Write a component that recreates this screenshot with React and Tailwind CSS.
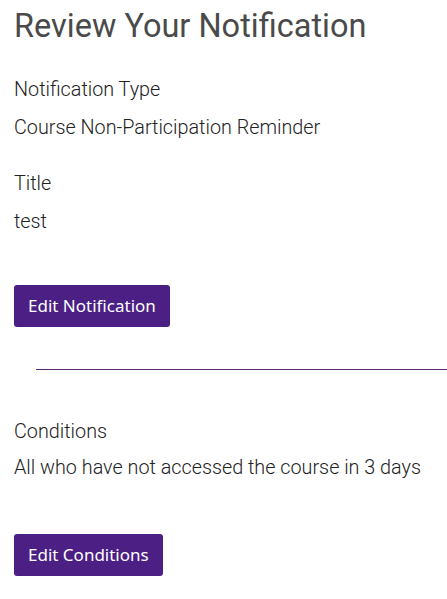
export default function App() {
  return (
    <div className="min-h-screen bg-white pl-[14px] pt-[7px] font-['Roboto',sans-serif]">
      <h1 className="text-[32.5px] leading-[38px] font-normal text-[#4a4a4a]">Review Your Notification</h1>

      {/* Notification details */}
      <div className="mt-[30px] text-[19.8px] font-light leading-[30px] text-[#222]">
        <p>Notification Type</p>
        <p className="mt-[8px]">Course Non-Participation Reminder</p>
        <p className="mt-[26px]">Title</p>
        <p className="mt-[8px]">test</p>
      </div>

      <button className="mt-[48px] h-[42px] rounded-[3px] bg-[#4b1f84] px-[14px] font-['Noto_Sans',sans-serif] text-[17px] text-white">
        Edit Notification
      </button>

      <div className="ml-[22px] mt-[42px] h-px bg-[#5a2a6a]" />

      {/* Conditions */}
      <div className="mt-[47px] text-[19.8px] font-light leading-[30px] text-[#222]">
        <p>Conditions</p>
        <p className="mt-[6px]">All who have not accessed the course in 3 days</p>
      </div>

      <button className="mt-[51px] h-[42px] rounded-[3px] bg-[#4b1f84] px-[14px] font-['Noto_Sans',sans-serif] text-[17px] text-white">
        Edit Conditions
      </button>
    </div>
  );
}
